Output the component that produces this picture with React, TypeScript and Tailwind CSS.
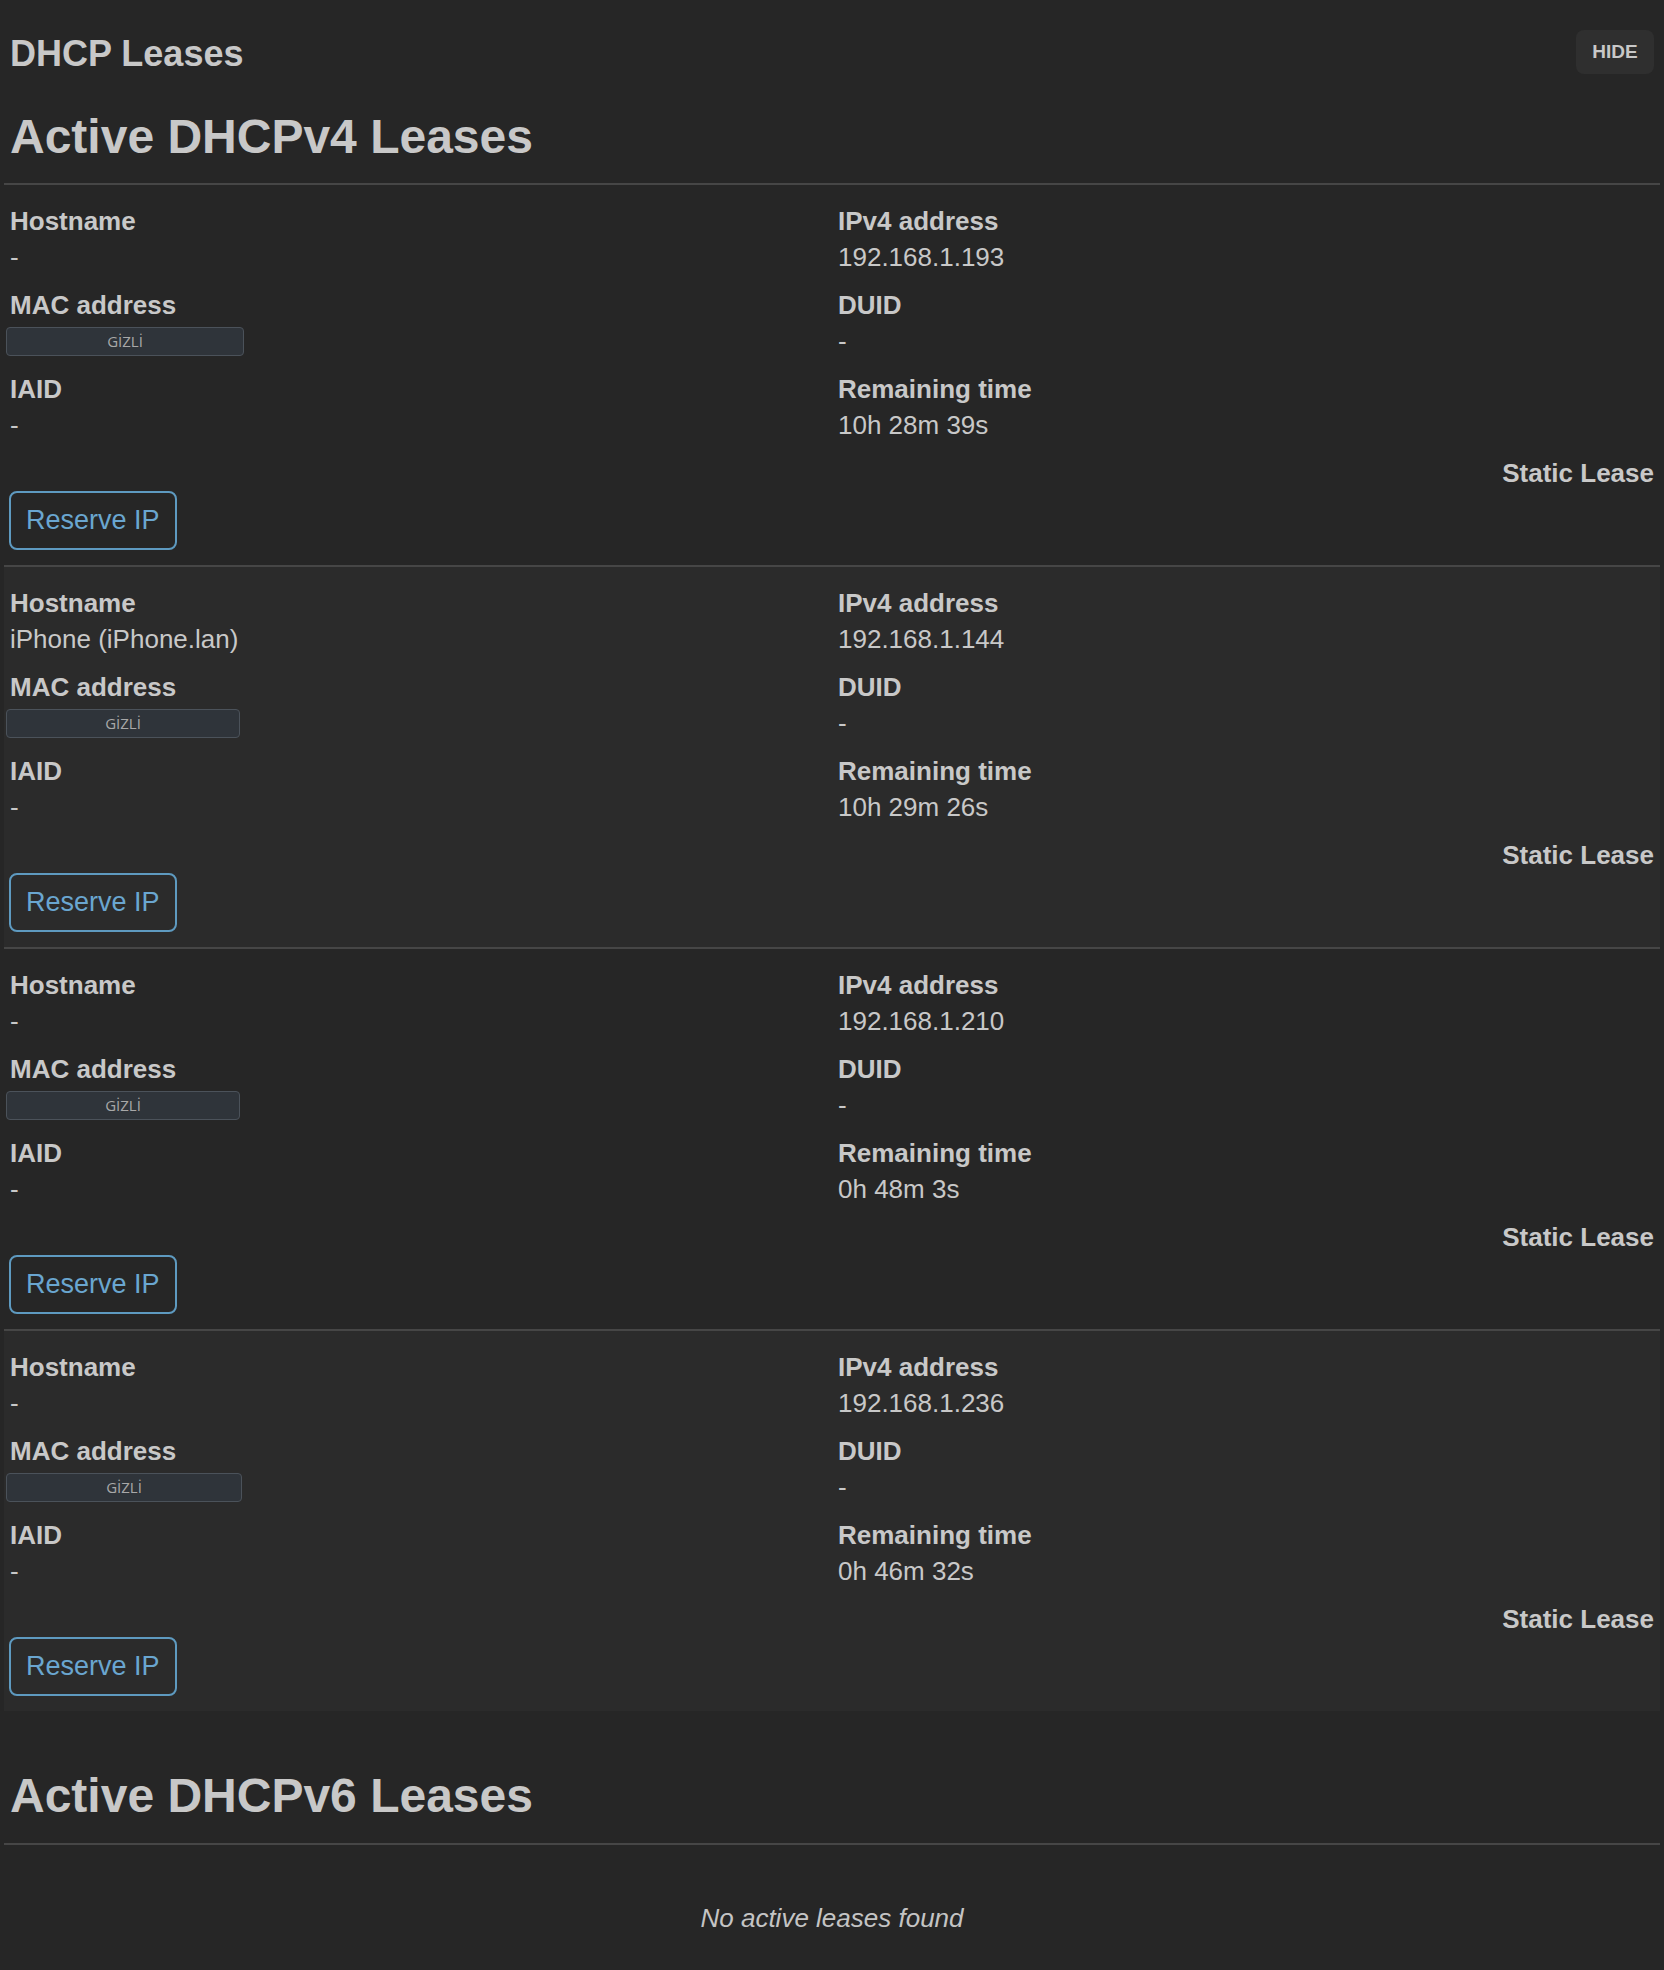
import React from "react";

type Lease = {
  hostname: string;
  ipv4: string;
  duid: string;
  iaid: string;
  remaining: string;
  macWidth: string;
};

const leases: Lease[] = [
  { hostname: "-", ipv4: "192.168.1.193", duid: "-", iaid: "-", remaining: "10h 28m 39s", macWidth: "w-[238px]" },
  { hostname: "iPhone (iPhone.lan)", ipv4: "192.168.1.144", duid: "-", iaid: "-", remaining: "10h 29m 26s", macWidth: "w-[234px]" },
  { hostname: "-", ipv4: "192.168.1.210", duid: "-", iaid: "-", remaining: "0h 48m 3s", macWidth: "w-[234px]" },
  { hostname: "-", ipv4: "192.168.1.236", duid: "-", iaid: "-", remaining: "0h 46m 32s", macWidth: "w-[236px]" },
];

function Field({ label, children }: { label: string; children: React.ReactNode }) {
  return (
    <div className="mb-[12px] last:mb-0">
      <div className="font-bold leading-[36px]">{label}</div>
      <div className="flex h-[36px] items-center leading-[36px]">{children}</div>
    </div>
  );
}

// obscured MAC address pill
function Hidden({ width }: { width: string }) {
  return (
    <div
      className={`-ml-[4px] h-[29px] ${width} rounded-[4px] border border-[#4b525a] bg-[#2f343a] text-center font-['Open_Sans',sans-serif] text-[15px] leading-[27px] text-[#a8a8a8]`}
    >
      GİZLİ
    </div>
  );
}

function LeaseRow({ lease }: { lease: Lease }) {
  return (
    <div className="border-t-2 border-[#464646] pt-[18px] pb-[15px] even:bg-[#2b2b2b]">
      <div className="grid grid-cols-2">
        <div className="px-[6px]">
          <Field label="Hostname">{lease.hostname}</Field>
          <Field label="MAC address">
            <Hidden width={lease.macWidth} />
          </Field>
          <Field label="IAID">{lease.iaid}</Field>
        </div>
        <div className="px-[6px]">
          <Field label="IPv4 address">{lease.ipv4}</Field>
          <Field label="DUID">{lease.duid}</Field>
          <Field label="Remaining time">{lease.remaining}</Field>
        </div>
      </div>
      <div className="mt-[12px] px-[6px] text-right font-bold leading-[36px]">Static Lease</div>
      <button className="ml-[5px] h-[59px] rounded-[8px] border-2 border-[#5e9ac0] px-[15px] text-[27px] text-[#6aa6d0]">
        Reserve IP
      </button>
    </div>
  );
}

export default function App() {
  return (
    <div className="min-h-screen bg-[#262626] px-[4px] pt-[30px] font-['Liberation_Sans',Helvetica,Arial,sans-serif] text-[26px] text-[#c8c8c8]">
      <div className="flex items-start justify-between px-[6px]">
        <h2 className="mt-[2px] text-[36px] font-bold leading-[44px]">DHCP Leases</h2>
        <button className="h-[44px] w-[78px] rounded-[8px] bg-[#2f2f2f] pt-[1px] text-[19px] font-bold text-[#c8c8c8]">
          HIDE
        </button>
      </div>

      <h1 className="mt-[33px] mb-[18px] px-[6px] text-[48px] font-bold leading-[56px]">
        Active DHCPv4 Leases
      </h1>
      <div>
        {leases.map((lease) => (
          <LeaseRow key={lease.ipv4} lease={lease} />
        ))}
      </div>

      <h1 className="mt-[57px] mb-[19px] px-[6px] text-[48px] font-bold leading-[56px]">
        Active DHCPv6 Leases
      </h1>
      <div className="h-[2px] bg-[#464646]" />
      <p className="mt-[55px] text-center italic leading-[36px] text-[#c4c4c4]">No active leases found</p>
    </div>
  );
}
